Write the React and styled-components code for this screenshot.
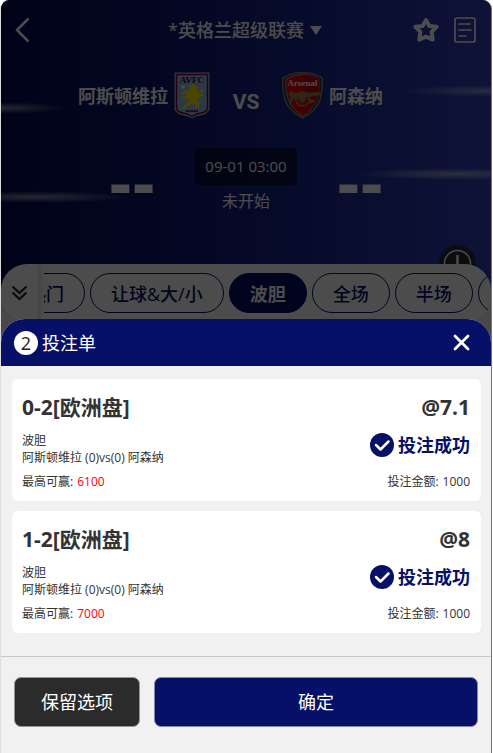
import React, { useEffect, useRef } from "react";
import styled, { createGlobalStyle } from "styled-components";


const GlobalStyle = createGlobalStyle`
  * {
    box-sizing: border-box;
  }

  body {
    margin: 0;
    background: #fff;
    font-family: "Open Sans", "Noto Sans CJK SC", sans-serif;
    color: #333;
  }

  button {
    font-family: inherit;
    padding: 0;
    border: none;
    background: none;
    cursor: pointer;
  }

  h1, h2, h3, p, ul {
    margin: 0;
    padding: 0;
    font-weight: normal;
  }

  svg {
    display: block;
  }
`;

const Screen = styled.main`
  position: relative;
  min-height: 100vh;
  margin-right: 1px;
  border-left: 1px solid #ddd;
  border-right: 1px solid #777;
  border-radius: 9px 9px 0 0;
  background: #f1f1f1;
  overflow: hidden;
`;

const Hero = styled.section`
  position: relative;
  height: 290px;
  color: #fff;
  background:
    radial-gradient(closest-side, rgba(255, 255, 255, 0.5), transparent) -65px 102px / 130px 12px no-repeat,
    radial-gradient(closest-side, rgba(255, 255, 255, 0.5), transparent) -60px 191px / 190px 12px no-repeat,
    radial-gradient(closest-side, rgba(255, 255, 255, 0.45), transparent) right -90px top 85px / 180px 12px no-repeat,
    radial-gradient(closest-side, rgba(255, 255, 255, 0.5), transparent) right -70px top 168px / 210px 12px no-repeat,
    linear-gradient(90deg, #000a50, #131f84 50%, #303fba);
`;

const TopBar = styled.header`
  display: flex;
  align-items: center;
  justify-content: space-between;
  height: 60px;
  padding: 0 15px 0 13px;
`;

const TopSide = styled.div`
  flex: 1;
  display: flex;
  justify-content: ${({ $end }) => ($end ? "flex-end" : "flex-start")};
  gap: 14px;
`;

const LeagueButton = styled.button`
  display: flex;
  align-items: center;
  gap: 6px;
  color: #fff;
  font-size: 18px;
  font-weight: 500;
  line-height: 26px;
`;

const Teams = styled.div`
  display: grid;
  grid-template-columns: 1fr 72px 1fr;
  align-items: center;
  height: 70px;
`;

const Team = styled.div`
  display: flex;
  align-items: center;
  justify-content: ${({ $home }) => ($home ? "flex-end" : "flex-start")};
  gap: 6px;
`;

const TeamName = styled.h2`
  padding-top: 2px;
  font-size: 18px;
  font-weight: 700;
  line-height: 26px;
`;

const Versus = styled.span`
  padding-top: 14px;
  text-align: center;
  font-family: Roboto, sans-serif;
  font-size: 21px;
  font-weight: 700;
  line-height: 24px;
`;

const ScoreRow = styled.div`
  display: flex;
  justify-content: center;
  align-items: center;
  gap: 40px;
  margin-top: 18px;
`;

const Score = styled.span`
  font-family: "Liberation Sans", sans-serif;
  font-size: 70px;
  font-weight: 700;
  line-height: 68px;
`;

const Kickoff = styled.div`
  text-align: center;
  font-size: 16px;
  line-height: 32px;
`;

const KickoffTime = styled.time`
  display: block;
  padding: 0 10px;
  border-radius: 4px;
  background: rgba(0, 0, 0, 0.5);
  font-size: 15px;
  line-height: 37px;
`;

const InfoButton = styled.button`
  position: absolute;
  top: 245px;
  right: 15px;
`;

const Markets = styled.nav`
  position: relative;
  display: flex;
  align-items: center;
  height: 58px;
  margin-top: -26px;
  padding-right: 3px;
  border-radius: 26px;
  background: #fff;
`;

const ExpandButton = styled.button`
  display: flex;
  align-items: center;
  justify-content: center;
  width: 37px;
  height: 58px;
  margin-right: 6px;
  border-radius: 26px 0 0 26px;
  box-shadow: 2px 0 5px rgba(0, 0, 0, 0.15);
`;

const MarketList = styled.div`
  flex: 1;
  display: flex;
  gap: 5px;
  min-width: 0;
  overflow: hidden;
`;

const Market = styled.button`
  flex: none;
  height: 40px;
  && {
    padding: 0 20px;
    border: 1px solid #061066;
    background: ${({ $active }) => ($active ? "#061066" : "transparent")};
  }
  border-radius: 20px;
  color: ${({ $active }) => ($active ? "#fff" : "#061066")};
  font-size: 18px;
  font-weight: ${({ $active }) => ($active ? 700 : 500)};
`;

const Backdrop = styled.div`
  position: absolute;
  inset: 0;
  background: rgba(0, 0, 0, 0.7);
`;

const Sheet = styled.section`
  position: absolute;
  left: 0;
  right: 0;
  bottom: 0;
  border-radius: 24px 24px 0 0;
  background: #f1f1f1;
  overflow: hidden;
`;

const SheetHeader = styled.header`
  display: flex;
  align-items: center;
  height: 47px;
  padding: 0 21px 0 13px;
  background: #061066;
  color: #fff;
`;

const Count = styled.span`
  width: 24px;
  height: 24px;
  margin-right: 4px;
  border-radius: 50%;
  background: #fff;
  color: #222;
  text-align: center;
  font-size: 18px;
  line-height: 24px;
`;

const SheetTitle = styled.h1`
  flex: 1;
  font-size: 18px;
  line-height: 26px;
`;

const BetList = styled.ul`
  display: flex;
  flex-direction: column;
  gap: 10px;
  padding: 13px 10px 23px 11px;
  list-style: none;
`;

const BetCard = styled.li`
  padding: 10px 11px 10px 10px;
  border-radius: 6px;
  background: #fff;
  font-size: 12px;
`;

const BetRow = styled.div`
  display: flex;
  justify-content: space-between;
  line-height: 18px;
`;

const BetHeading = styled(BetRow)`
  margin-bottom: 7px;
  font-size: 21px;
  font-weight: 700;
  line-height: 36px;
`;

const Selection = styled.h3`
  font-size: inherit;
  font-weight: 700;
`;

const BetDetail = styled(BetRow)`
  margin-bottom: 7px;
  line-height: 17px;
`;

const BetStatus = styled.strong`
  display: flex;
  align-items: center;
  gap: 4px;
  height: 26px;
  color: #061066;
  font-size: 18px;
  line-height: 26px;
`;

const Amount = styled.span`
  margin-left: 4px;
  color: ${({ $win }) => ($win ? "#f00" : "inherit")};
`;

const SheetFooter = styled.footer`
  display: flex;
  gap: 14px;
  padding: 20px 13px 26px;
  border-top: 1px solid #c8c8c8;
`;

const ActionButton = styled.button`
  flex: ${({ $primary }) => ($primary ? "1" : "0 0 126px")};
  height: 50px;
  && {
    padding-bottom: 3px;
    border: 1px solid ${({ $primary }) => ($primary ? "#8388b3" : "#959595")};
    background: ${({ $primary }) => ($primary ? "#061066" : "#2b2b2b")};
  }
  border-radius: 7px;
  color: #fff;
  font-size: 18px;
`;

const VillaCrest = () => (
  <svg width="36" height="47" viewBox="0 0 36 47">
    <path d="M1 1H35V36Q35 41 28 42.500Q21 43.500 18 46Q15 43.500 8 42.500Q1 41 1 36Z" fill="#95bfe5" stroke="#b9b9c4" />
    <path d="M2.500 2.500H33.500V35.500Q33.500 40 27 41Q21 42 18 44.500Q15 42 9 41Q2.500 40 2.500 35.500Z" fill="#95bfe5" stroke="#7a003c" strokeWidth="1.500" />
    <text x="18" y="11" textAnchor="middle" fontFamily="Liberation Serif, serif" fontSize="9" fontWeight="700" fill="#4a0828">AVFC</text>
    <path d="M17 12.500L20 12L22 14L23.500 15L22.500 17.500L24.500 20L26 22.500L27.500 20L25.500 18.500L28 17L29.500 19L27.500 21L29 23L27 25.500L24.500 26L23 28.500L26 31.500L24 34L26 36H20.500L22 33.500L19 31L16 33L13 34L12 36.500H8.500L9.500 33.500L13.500 31L15.500 28L14 26L10 27.500L8 26L9.500 24.500L13 24L12 21.500L8.500 22L7.500 19.500L10 18.500L14 19L16 17L14.500 15Z" fill="#ffe600" />
    <path d="M9 12.500L10 14L11.500 14.200L10.300 15.300L10.600 17L9 16.200L7.400 17L7.700 15.300L6.500 14.200L8.100 14Z" fill="#fff" />
    <path d="M12 39H24" stroke="#670e36" strokeWidth="2" strokeDasharray="2 .6" />
  </svg>
);

const ArsenalCrest = () => (
  <svg width="41" height="47" viewBox="0 0 41 47">
    <path d="M1 6Q12 0 20.500 1Q30 0 40 6Q41 18 38 28Q34 39 20.500 46Q7 39 3 28Q0 18 1 6Z" fill="#17346d" stroke="#9c824a" strokeWidth="1.500" />
    <path d="M4 7Q12 2 20.500 2.500Q30 2 37 7Q38 18 35 27Q31 38 20.500 44Q10 38 6 27Q3 18 4 7Z" fill="#ef0107" stroke="#c8c8c8" strokeWidth=".7" />
    <path d="M21 3V43Q32 36 35 27Q38 18 37 7Q29 2 21 3Z" fill="#c30010" />
    <text x="20.500" y="14" textAnchor="middle" fontFamily="Liberation Serif, serif" fontSize="9" fontWeight="700" fill="#fff">Arsenal</text>
    <path d="M7 20L10 19L12 21L40 20V23L25 25L11 27Q10 31 8 33L7 30Q10 26 7 23Z" fill="#9c824a" />
    <circle cx="20.500" cy="27" r="7" fill="none" stroke="#9c824a" strokeWidth="1.500" />
    <circle cx="20.500" cy="27" r="2.500" fill="none" stroke="#b89c60" strokeWidth="1" />
    <path d="M20.500 20V34M13.500 27H27.500M15.500 22L25.500 32M25.500 22L15.500 32" stroke="#9c824a" />
    <path d="M27 27L34 29L28 32Z" fill="#9c824a" />
  </svg>
);

const CheckIcon = () => (
  <svg width="24" height="24" viewBox="0 0 24 24">
    <circle cx="12" cy="12" r="12" fill="#061066" />
    <path d="M6 12L10.500 16.500L18.500 8.500" fill="none" stroke="#fff" strokeWidth="2.500" strokeLinecap="round" strokeLinejoin="round" />
  </svg>
);

const markets = ["热门", "让球&大/小", "波胆", "全场", "半场", "角球"];

const bets = [
  { pick: "0-2[欧洲盘]", odds: "7.1", win: 6100, stake: 1000 },
  { pick: "1-2[欧洲盘]", odds: "8", win: 7000, stake: 1000 },
];

const MatchHero = () => (
  <Hero>
    <TopBar>
      <TopSide>
        <button aria-label="返回">
          <svg width="16" height="26" viewBox="0 0 16 26" fill="none" stroke="#fff" strokeWidth="2.500">
            <path d="M14.500 1.500L3 13L14.500 24.500" />
          </svg>
        </button>
      </TopSide>
      <LeagueButton>
        *英格兰超级联赛
        <svg width="12" height="9" viewBox="0 0 12 9">
          <path d="M0 0H12L6 9Z" fill="#fff" />
        </svg>
      </LeagueButton>
      <TopSide $end>
        <button aria-label="收藏">
          <svg width="28" height="26" viewBox="0 0 28 26" fill="none" stroke="#fff" strokeWidth="4" strokeLinejoin="round">
            <path d="M14 3L17.300 8.900L24.500 9.800L19.600 14.900L20.700 22.600L14 19.700L7.300 22.600L8.400 14.900L3.500 9.800L10.700 8.900Z" />
          </svg>
        </button>
        <button aria-label="注单">
          <svg width="22" height="26" viewBox="0 0 22 26" fill="none" stroke="#fff" strokeWidth="1.700" strokeLinecap="round">
            <rect x="1" y="1" width="20" height="24" rx="2" />
            <path d="M5 7H16M5 13H17M5 19H12" />
          </svg>
        </button>
      </TopSide>
    </TopBar>
    <Teams>
      <Team $home>
        <TeamName>阿斯顿维拉</TeamName>
        <VillaCrest />
      </Team>
      <Versus>VS</Versus>
      <Team>
        <ArsenalCrest />
        <TeamName>阿森纳</TeamName>
      </Team>
    </Teams>
    <ScoreRow>
      <Score>--</Score>
      <Kickoff>
        <KickoffTime>09-01 03:00</KickoffTime>
        未开始
      </Kickoff>
      <Score>--</Score>
    </ScoreRow>
    <InfoButton aria-label="提示">
      <svg width="37" height="37" viewBox="0 0 37 37">
        <circle cx="18.500" cy="18.500" r="18.500" fill="#2b2b38" />
        <circle cx="18.500" cy="18.500" r="13" fill="none" stroke="#fff" strokeWidth="1.500" />
        <path d="M18.500 10V22" stroke="#fff" strokeWidth="2.500" />
        <circle cx="18.500" cy="26" r="1.500" fill="#fff" />
      </svg>
    </InfoButton>
  </Hero>
);

const MarketTabs = () => {
  const listRef = useRef(null);

  useEffect(() => {
    listRef.current.scrollLeft = 37;
  }, []);

  return (
    <Markets>
      <ExpandButton aria-label="展开">
        <svg width="17" height="16" viewBox="0 0 17 16" fill="none" stroke="#222" strokeWidth="2.200">
          <path d="M1.500 1.500L8.500 8L15.500 1.500M1.500 7.500L8.500 14L15.500 7.500" />
        </svg>
      </ExpandButton>
      <MarketList ref={listRef}>
        {markets.map((name) => (
          <Market key={name} $active={name === "波胆"}>{name}</Market>
        ))}
      </MarketList>
    </Markets>
  );
};

const Bet = ({ pick, odds, win, stake }) => (
  <BetCard>
    <BetHeading>
      <Selection>{pick}</Selection>
      <span>@{odds}</span>
    </BetHeading>
    <BetDetail>
      <div>
        <p>波胆</p>
        <p>阿斯顿维拉 (0)vs(0) 阿森纳</p>
      </div>
      <BetStatus>
        <CheckIcon />
        投注成功
      </BetStatus>
    </BetDetail>
    <BetRow>
      <span>最高可赢:<Amount $win>{win}</Amount></span>
      <span>投注金额:<Amount>{stake}</Amount></span>
    </BetRow>
  </BetCard>
);

const App = () => (
  <>
    <GlobalStyle />
    <Screen>
      <MatchHero />
      <MarketTabs />
      <Backdrop />
      <Sheet>
        <SheetHeader>
          <Count>{bets.length}</Count>
          <SheetTitle>投注单</SheetTitle>
          <button aria-label="关闭">
            <svg width="17" height="17" viewBox="0 0 17 17" stroke="#fff" strokeWidth="2.800" strokeLinecap="round">
              <path d="M2 2L15 15M15 2L2 15" />
            </svg>
          </button>
        </SheetHeader>
        <BetList>
          {bets.map((bet) => (
            <Bet key={bet.pick} {...bet} />
          ))}
        </BetList>
        <SheetFooter>
          <ActionButton>保留选项</ActionButton>
          <ActionButton $primary>确定</ActionButton>
        </SheetFooter>
      </Sheet>
    </Screen>
  </>
);

export default App;
